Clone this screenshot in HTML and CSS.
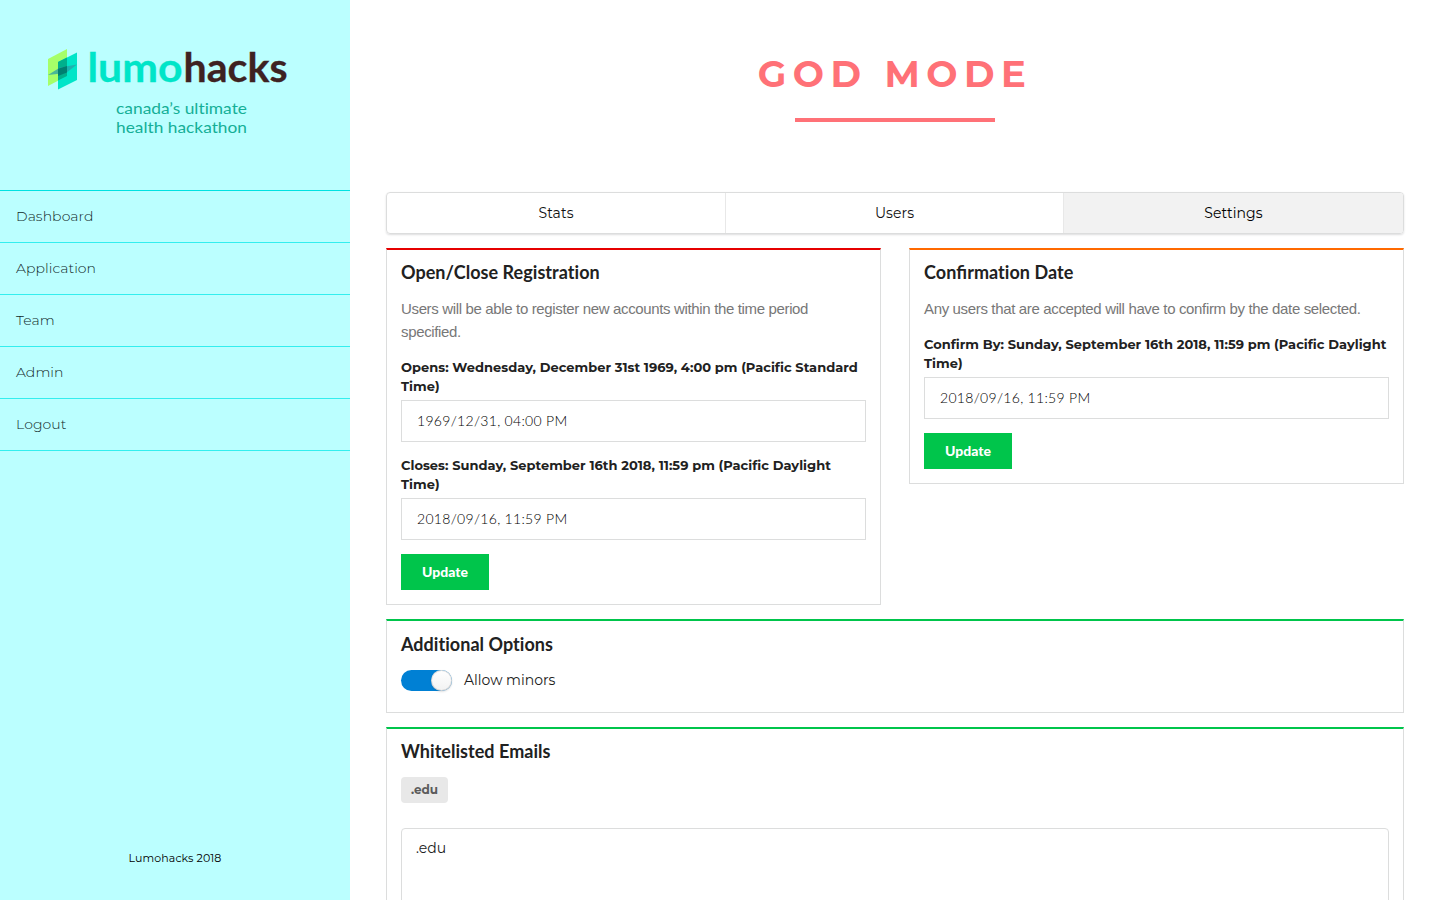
FILE: index.html
```html
<!DOCTYPE html>
<html lang="en">
<head>
<meta charset="utf-8">
<title>Lumohacks 2018</title>
<link rel="stylesheet" href="styles.css">
</head>
<body>
<div class="app">
  <aside class="sidebar">
    <svg class="logo" viewBox="0 0 350 190" width="350" height="190" role="img" aria-label="lumohacks">
      <polygon points="48,59 67,49 67,76 48,86" fill="#a6ff69"/>
      <polygon points="58,62 77,52.500 77,80 58,89.500" fill="#00e5c8"/>
      <polygon points="58,62 67,57.500 67,76 58,80.500" fill="#00b08c"/>
      <polygon points="48,75 60,67.500 77,64.500 66,73" fill="#299fa8" opacity=".75"/>
      <polygon points="58,68.700 67,66 67,72.500 58,76" fill="#007f70"/>
      <text class="logo-name lumo" x="87.500" y="82" textLength="95" lengthAdjust="spacingAndGlyphs">lumo</text>
      <text class="logo-name hacks" x="183.500" y="82" textLength="104" lengthAdjust="spacingAndGlyphs">hacks</text>
      <text class="logo-tag" x="116" y="114" textLength="131" lengthAdjust="spacingAndGlyphs">canada’s ultimate</text>
      <text class="logo-tag" x="116" y="133" textLength="131" lengthAdjust="spacingAndGlyphs">health hackathon</text>
    </svg>
    <nav class="nav">
      <a class="nav-item">Dashboard</a>
      <a class="nav-item">Application</a>
      <a class="nav-item">Team</a>
      <a class="nav-item">Admin</a>
      <a class="nav-item">Logout</a>
    </nav>
    <footer class="copyright">Lumohacks 2018</footer>
  </aside>
  <main class="main">
    <h1 class="title">GOD MODE</h1>
    <div class="title-rule"></div>
    <div class="tabs">
      <a class="tab">Stats</a>
      <a class="tab">Users</a>
      <a class="tab tab-active">Settings</a>
    </div>
    <div class="cards">
      <section class="card red">
        <h3 class="card-title">Open/Close Registration</h3>
        <p class="desc">Users will be able to register new accounts within the time period<br>specified.</p>
        <div class="label">Opens: Wednesday, December 31st 1969, 4:00 pm (Pacific Standard<br>Time)</div>
        <div class="input">1969/12/31, 04:00 PM</div>
        <div class="label">Closes: Sunday, September 16th 2018, 11:59 pm (Pacific Daylight<br>Time)</div>
        <div class="input">2018/09/16, 11:59 PM</div>
        <button class="button">Update</button>
      </section>
      <section class="card orange">
        <h3 class="card-title">Con<span class="ligature">fi</span>rmation Date</h3>
        <p class="desc">Any users that are accepted will have to confirm by the date selected.</p>
        <div class="label">Confirm By: Sunday, September 16th 2018, 11:59 pm (Pacific Daylight<br>Time)</div>
        <div class="input">2018/09/16, 11:59 PM</div>
        <button class="button">Update</button>
      </section>
      <section class="card green wide options">
        <h3 class="card-title">Additional Options</h3>
        <div class="toggle-row"><span class="toggle"><span class="knob"></span></span><span class="toggle-label">Allow minors</span></div>
      </section>
      <section class="card green wide emails">
        <h3 class="card-title">Whitelisted Emails</h3>
        <span class="chip">.edu</span>
        <div class="textarea">.edu</div>
      </section>
    </div>
  </main>
</div>
</body>
</html>
```
FILE: styles.css
```css
* { box-sizing: border-box; }
body { margin: 0; background: #fff; color: #212121; font: 14px/20px Montserrat, Inter, sans-serif; }
.app { display: flex; height: 900px; overflow: hidden; }
.sidebar { width: 350px; flex: none; background: #bbffff; display: flex; flex-direction: column; }
.logo { display: block; flex: none; }
.logo-name { font: 700 40px Lato, sans-serif; stroke-width: .3px; }
.lumo { fill: #00e5c8; stroke: #00e5c8; }
.hacks { fill: #3e2222; stroke: #3e2222; }
.logo-tag { font: 400 16px Lato, sans-serif; font-variant-ligatures: none; fill: #15af97; }
.nav { border-top: 1px solid #00e1e1; }
.nav-item { display: block; height: 52px; padding: 15px 16px 0; border-bottom: 1px solid #33eeee; font-weight: 300; letter-spacing: .07px; color: #102828; }
.copyright { margin-top: auto; padding-bottom: 32px; text-align: center; color: #000; font-size: 11px; letter-spacing: .1px; }
.main { flex: 1; padding: 48px 36px 0; }
.title { margin: 0; height: 50px; text-align: center; font-size: 37px; line-height: 51px; font-weight: 700; letter-spacing: 6.500px; color: #ff7177; }
.title-rule { width: 200px; height: 4px; margin: 20px auto 70px; background: #ff7177; }
.tabs { display: grid; grid-template-columns: 339px 338px 1fr; height: 42px; border: 1px solid #dcdddd; border-radius: 4px; box-shadow: 0 1px 2px rgba(34, 36, 38, .15); overflow: hidden; }
.tab { border-right: 1px solid #e8e8e8; text-align: center; line-height: 40px; letter-spacing: .05px; color: #111; }
.tab:last-child { border-right: 0; }
.tab-active { background: #f2f2f2; color: #000; }
.cards { display: grid; grid-template-columns: 1fr 1fr; column-gap: 28px; row-gap: 14px; align-items: start; margin-top: 14px; }
.card { border: 1px solid #dcdddd; border-top-width: 2px; padding: 11px 14px 14px; }
.wide { grid-column: 1 / -1; }
.red { border-top-color: #e60000; }
.orange { border-top-color: #ff6900; }
.green { border-top-color: #00c54b; }
.card-title { margin: 0 0 14px; font: 700 18px/22px Lato, sans-serif; font-variant-ligatures: none; letter-spacing: .04px; color: #212121; }
.ligature { font-variant-ligatures: normal; letter-spacing: 0; }
.desc { margin: 0 0 15px; font: 15px/23px "Liberation Sans", sans-serif; letter-spacing: -.35px; color: #777; }
.label { margin-bottom: 4px; font-size: 13px; line-height: 19px; font-weight: 700; letter-spacing: .025px; }
.input { height: 42px; margin-bottom: 14px; padding: 0 15px; border: 1px solid #dcdddd; font: 300 14px/40px Lato, sans-serif; letter-spacing: .3px; color: #000; }
.button { display: block; width: 88px; height: 36px; padding: 0; border: 0; background: #00c54b; color: #fff; font: 900 14px/36px Lato, sans-serif; }
.options { height: 94px; padding-top: 12px; }
.toggle-row { display: flex; align-items: center; height: 21px; margin-top: 15px; }
.toggle { width: 51px; height: 21px; border-radius: 11px; background: #0080d4; display: flex; justify-content: flex-end; }
.knob { width: 21px; height: 21px; border-radius: 50%; background: linear-gradient(#fff, #f2f2f2); box-shadow: 0 1px 2px rgba(34, 36, 38, .15), 0 0 0 1px rgba(34, 36, 38, .15) inset; }
.toggle-label { margin: -2px 0 0 12px; }
.emails { height: 230px; }
.chip { display: block; width: 47px; height: 26px; margin-top: 15px; border-radius: 4px; background: #e8e8e8; text-align: center; font-size: 12px; line-height: 25px; font-weight: 700; color: #5b5b5b; }
.textarea { height: 140px; margin-top: 25px; padding: 9px 14px; border: 1px solid #dcdddd; border-radius: 4px; }
```
